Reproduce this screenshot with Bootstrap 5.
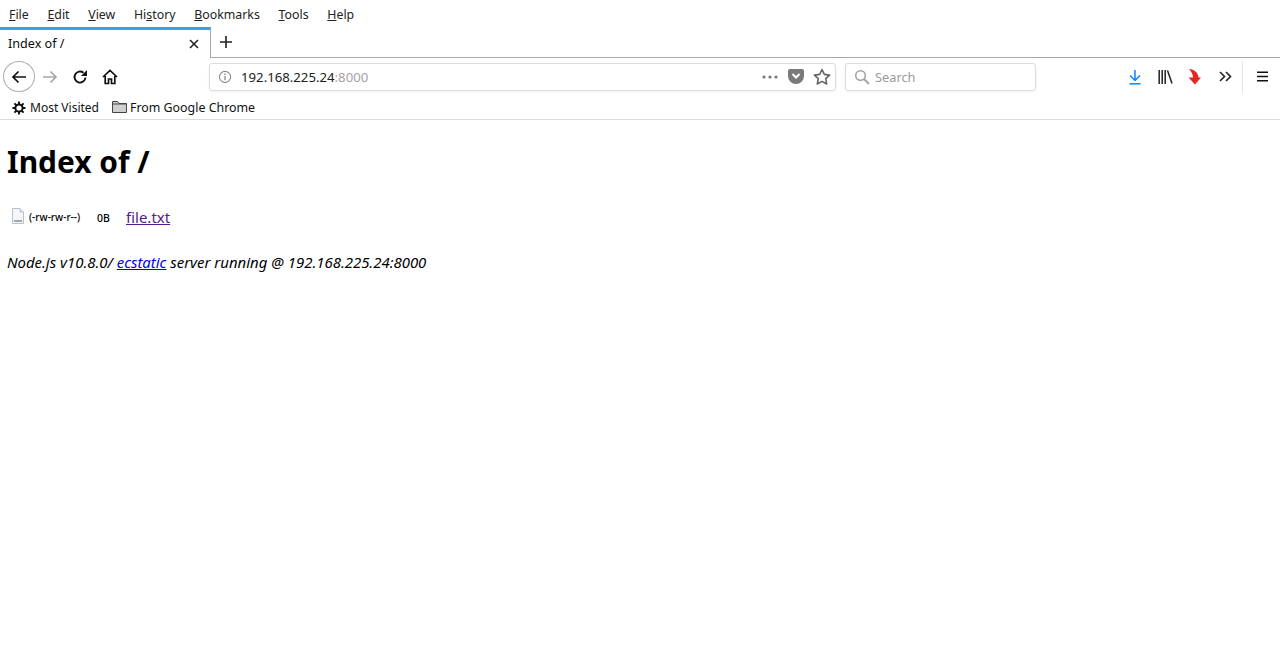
<!DOCTYPE html>
<html lang="en">
<head>
<meta charset="utf-8">
<title>Index of /</title>
<link rel="stylesheet" href="https://cdn.jsdelivr.net/npm/bootstrap@5.3.0/dist/css/bootstrap.min.css">
<style>
html,body{height:100%;background:#fff;color:#000;font-family:"Noto Sans",sans-serif;overflow:hidden}
.chrome-ui{font-size:12px;color:#0c0c0d;line-height:16px}
.menu-row{height:27px;padding:0 0 0 9px;gap:18.7px;color:#222;font-size:12.35px}
.menu-row span{display:block;padding-top:7px}
.menu-row u{text-underline-offset:1px}
.tab-row{height:31px;border-bottom:1px solid #a8a8a8}
.tab-on{width:211px;height:31px;border-top:3px solid #3a9fe8;border-right:1px solid #a8a8a8;background:#fff;padding:0 11px 1px 8px;margin-bottom:-1px;font-size:12.6px}
.tab-on svg{display:block}
.newtab{width:30px;display:flex;justify-content:center}
.nav-row{height:37px;padding-left:3px}
.backbtn{width:32px;height:31px;border:1px solid #adadad;border-radius:50%}
.iconslot{display:flex;align-items:center;justify-content:center;width:30px;height:31px}
.urlbar{width:627px;height:28px;margin-left:84px;border:1px solid #dcdcde;border-radius:3px;padding:0 4px 0 8px;box-shadow:0 1px 3px rgba(0,0,0,.06);font-size:13.2px;color:#222}
.urlbar .porttxt{color:#a3a3a3}
.info-ico{margin-right:9px}
.pocket-ico{margin-left:10px}
.star-ico{margin-left:9px}
.searchbar{width:191px;height:28px;margin-left:9px;border:1px solid #dcdcde;border-radius:3px;padding:0 8px;box-shadow:0 1px 3px rgba(0,0,0,.06);font-size:12.8px;color:#9a9a9a;gap:5px}
.sep-v{width:1px;height:32px;background:#e4e4e4;margin:0 14px 0 2px}
.burger-ico{margin-right:12px}
.book-row{height:25px;padding:1px 0 0 12px;border-bottom:1px solid #d9dbde;gap:13px;font-size:12.4px;color:#111}
.book-row svg{display:block}
.tight-label{display:block;width:69px;white-space:nowrap;font-size:12px}
.folder-group{gap:3px}
.folder-group svg{margin-bottom:2px}
.page-body{padding:0 7px}
.page-title{font-size:29.9px;font-weight:700;line-height:39px;margin:22px 0 0}
.file-row{margin-top:23px;height:26px}
.file-row .thumb{width:12px;height:16px;margin:0 5px 2px}
.perm{font-size:11px;font-weight:500;transform:scaleX(.91);transform-origin:left;width:68px;white-space:nowrap;padding-top:1px}
.sz{font-size:10.500px;font-weight:500;width:29px;padding-top:3px}
.visited-link{color:#551a8b;font-size:15px}
.foot-line{font-size:14.93px;font-style:italic;margin:22px 0 0;line-height:20px}
.foot-line a{color:#00e}
</style>
</head>
<body>
<div class="chrome-ui">
  <div class="menu-row d-flex">
    <span><u>F</u>ile</span><span><u>E</u>dit</span><span><u>V</u>iew</span><span>Hi<u>s</u>tory</span><span><u>B</u>ookmarks</span><span><u>T</u>ools</span><span><u>H</u>elp</span>
  </div>
  <div class="tab-row d-flex">
    <div class="tab-on d-flex align-items-center justify-content-between">
      <span>Index of /</span>
      <svg width="10" height="10" viewBox="0 0 10 10"><path d="M1 1l8 8M9 1l-8 8" stroke="#222" stroke-width="1.6"/></svg>
    </div>
    <div class="newtab align-items-center">
      <svg width="14" height="14" viewBox="0 0 14 14"><path d="M7 1v12M1 7h12" stroke="#222" stroke-width="1.6"/></svg>
    </div>
  </div>
  <div class="nav-row d-flex align-items-center">
    <div class="backbtn d-flex align-items-center justify-content-center">
      <svg width="16" height="14" viewBox="0 0 16 14"><path d="M15 7H2M7.500 1.500L2 7l5.500 5.500" fill="none" stroke="#111" stroke-width="1.700"/></svg>
    </div>
    <div class="iconslot">
      <svg width="16" height="14" viewBox="0 0 16 14"><path d="M1 7h13M8.500 1.500L14 7l-5.500 5.500" fill="none" stroke="#a6a6a6" stroke-width="1.700"/></svg>
    </div>
    <div class="iconslot">
      <svg width="16" height="16" viewBox="0 0 16 16"><path d="M13.500 8.500A5.500 5.500 0 1 1 11.500 3.800" fill="none" stroke="#111" stroke-width="1.900"/><path d="M15 1v6H9z" fill="#111"/></svg>
    </div>
    <div class="iconslot">
      <svg width="16" height="16" viewBox="0 0 16 16"><path d="M1 8l7-6.500L15 8M3.200 7v7.500h3.300V10h3v4.500h3.300V7" fill="none" stroke="#111" stroke-width="1.700"/></svg>
    </div>
    <div class="urlbar d-flex align-items-center">
      <svg class="info-ico" width="14" height="14" viewBox="0 0 14 14"><circle cx="7" cy="7" r="5.600" fill="none" stroke="#8a8a8a" stroke-width="1.100"/><path d="M7 6v4.200M7 3.600v1.300" stroke="#8a8a8a" stroke-width="1.300"/></svg>
      <span>192.168.225.24<span class="porttxt">:8000</span></span>
      <svg class="ms-auto" width="16" height="4" viewBox="0 0 16 4"><circle cx="2" cy="2" r="1.600" fill="#777"/><circle cx="8" cy="2" r="1.600" fill="#777"/><circle cx="14" cy="2" r="1.600" fill="#777"/></svg>
      <svg class="pocket-ico" width="16" height="15" viewBox="0 0 16 15"><path d="M2 0h12a2 2 0 0 1 2 2v5a8 8 0 0 1-16 0V2a2 2 0 0 1 2-2z" fill="#7a7a7a"/><path d="M4.500 5L8 8.500 11.500 5" fill="none" stroke="#fff" stroke-width="2"/></svg>
      <svg class="star-ico" width="18" height="17" viewBox="0 0 18 17"><path d="M9 1.500l2.300 4.900 5.300.7-3.900 3.600 1 5.300L9 13.400 4.300 16l1-5.300L1.400 7.100l5.300-.7z" fill="none" stroke="#666" stroke-width="1.600" stroke-linejoin="round"/></svg>
    </div>
    <div class="searchbar d-flex align-items-center">
      <svg width="16" height="16" viewBox="0 0 16 16"><circle cx="6.500" cy="6.500" r="4.800" fill="none" stroke="#a0a0a0" stroke-width="1.500"/><path d="M10 10l5 5" stroke="#a0a0a0" stroke-width="1.800"/></svg>
      <span>Search</span>
    </div>
    <div class="ms-auto d-flex align-items-center">
      <div class="iconslot">
        <svg width="14" height="16" viewBox="0 0 14 16"><path d="M7 1v10M2 6.500L7 11.500l5-5" fill="none" stroke="#0a84ff" stroke-width="1.500"/><path d="M1.500 14.800h11" stroke="#0a84ff" stroke-width="1.500"/></svg>
      </div>
      <div class="iconslot">
        <svg width="15" height="14" viewBox="0 0 15 14"><path d="M1.200 0v14M4.200 0v14M7.200 0v14" stroke="#222" stroke-width="1.500"/><path d="M9.500.500l4.500 13" stroke="#222" stroke-width="1.500"/></svg>
      </div>
      <div class="iconslot">
        <svg width="14" height="16" viewBox="0 0 14 16"><path d="M1 0C6 .5 10 3 10.500 8.500H13L7 15.500 .5 8.500H5C5 5 3 2 1 0z" fill="#e5261f"/></svg>
      </div>
      <div class="iconslot">
        <svg width="13" height="11" viewBox="0 0 13 11"><path d="M1 1l4.500 4.500L1 10M7 1l4.500 4.500L7 10" fill="none" stroke="#222" stroke-width="1.600"/></svg>
      </div>
      <div class="sep-v"></div>
      <svg class="burger-ico" width="11" height="11" viewBox="0 0 11 11"><path d="M0 1.200h11M0 5.500h11M0 9.800h11" stroke="#111" stroke-width="1.600"/></svg>
    </div>
  </div>
  <div class="book-row d-flex align-items-center">
    <div class="d-flex align-items-center gap-1">
      <svg width="14" height="14" viewBox="0 0 14 14"><circle cx="7" cy="7" r="3.600" fill="none" stroke="#111" stroke-width="2"/><path d="M7 .5v3M7 10.500v3M.5 7h3M10.500 7h3M2.400 2.400l2.100 2.100M9.500 9.500l2.100 2.100M11.600 2.400L9.500 4.500M4.500 9.500l-2.100 2.100" stroke="#111" stroke-width="1.900"/></svg>
      <span class="tight-label">Most Visited</span>
    </div>
    <div class="d-flex align-items-center folder-group">
      <svg width="15" height="13" viewBox="0 0 15 13"><path d="M.5 12.500V1.500h5l1.500 2h7.500v9z" fill="#cfcfcf" stroke="#444"/><path d="M.5 4h14" stroke="#444"/></svg>
      <span>From Google Chrome</span>
    </div>
  </div>
</div>
<main class="page-body">
  <h1 class="page-title">Index of /</h1>
  <div class="file-row d-flex align-items-center">
    <svg class="thumb" viewBox="0 0 12 16"><path d="M.5.5h7.500l3.500 3.500v11.500H.5z" fill="#f4f6f8" stroke="#b9c2c9"/><path d="M8 .5v3.500h3.500" fill="#dde3e8" stroke="#b9c2c9"/><path d="M2 12h8v2H2z" fill="#9aa7b0"/></svg>
    <span class="perm">(-rw-rw-r--)</span>
    <span class="sz">0B</span>
    <a class="visited-link" href="#">file.txt</a>
  </div>
  <p class="foot-line">Node.js v10.8.0/ <a href="#">ecstatic</a> server running @ 192.168.225.24:8000</p>
</main>
<script src="https://cdn.jsdelivr.net/npm/bootstrap@5.3.0/dist/js/bootstrap.bundle.min.js"></script>
</body>
</html>
